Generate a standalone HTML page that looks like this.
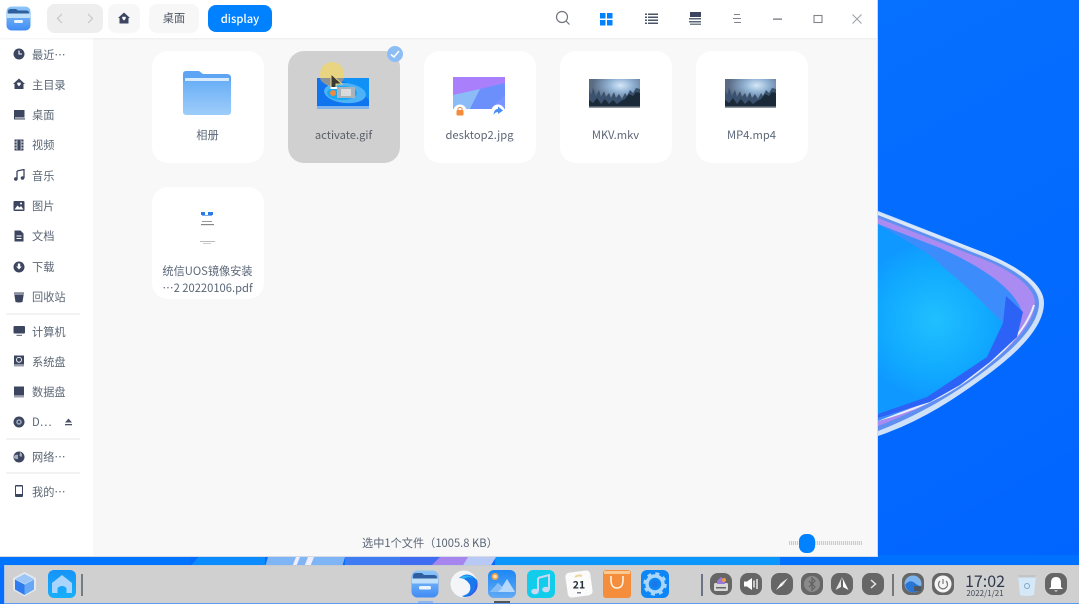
<!DOCTYPE html>
<html><head><meta charset="utf-8">
<style>
*{box-sizing:border-box}
html{background:#0068ff}
html,body{margin:0;padding:0;width:1079px;height:604px;overflow:hidden;font-family:"Noto Sans CJK SC","Liberation Sans",sans-serif;color:#526070}
body{filter:blur(.3px)}
.a{position:absolute}
#win{left:0;top:0;width:878px;height:557px;background:#f8f8f8;border-right:1px solid #d8dbe0;border-bottom:1px solid #d5dce5}
#tb{left:0;top:0;width:877px;height:38px;background:#fff;box-shadow:0 1px 2px rgba(0,0,0,.05)}
#side{left:0;top:38px;width:93px;height:518px;background:#fff}
.btn{background:#f7f7f7;border-radius:8px;top:4px;height:29px;text-align:center;font-size:11.2px;line-height:29px;color:#4c5563}
.it{position:absolute;left:32px;font-size:11.2px;line-height:16px;color:#5a6675;white-space:nowrap;letter-spacing:0}
.ic{position:absolute;left:12.5px;width:12px;height:12px}
.sep{position:absolute;left:6px;width:74px;height:2px;background:#f3f3f3}
.card{position:absolute;width:112px;height:112px;background:#fff;border-radius:16px}
.lbl{position:absolute;left:0;width:112px;top:76px;text-align:center;font-size:11.2px;line-height:17px;color:#5b6778;white-space:nowrap}
#dock{left:4px;top:565px;width:1075px;height:38px;background:#d0d0d0;border-left:1px solid #a9c3e8;border-top:1px solid #c6cbd2}
.tr{position:absolute;top:573px;width:22px;height:22px;border-radius:8px;background:#666}
.tr svg,.di svg{display:block}
.di{position:absolute;top:570px;width:28px;height:28px}
</style></head><body>

<svg class="a" style="left:0;top:0" width="1079" height="604" viewBox="0 0 1079 604">
<defs>
<linearGradient id="bg" x1="0" y1="0" x2="1" y2="1"><stop offset="0" stop-color="#0a78ff"/><stop offset="1" stop-color="#0064ff"/></linearGradient>
<radialGradient id="sw" cx="935" cy="320" r="80" gradientUnits="userSpaceOnUse"><stop offset="0" stop-color="#20c0ff"/><stop offset=".7" stop-color="#10a8ff"/><stop offset="1" stop-color="#0f98ff"/></radialGradient>
</defs>
<rect width="1079" height="604" fill="url(#bg)"/>
<path d="M878 211 L985 253 C1022 268 1044 285 1044 303 C1044 330 1010 358 990 373 C960 395 925 420 878 436Z" fill="#cfe0f9"/>
<path d="M878 215 L982 256 C1016 269 1039 286 1039 303 C1039 328 1006 355 986 370 C957 392 922 414 878 431Z" fill="#5f8ff0"/>
<path d="M878 218 L980 258 C1014 271 1035 288 1035 303 C1035 326 1004 353 984 368 C955 390 920 410 878 426Z" fill="#a98bf2"/>
<path d="M878 420 C925 408 960 388 990 362 C1010 346 1028 325 1034 305" fill="none" stroke="#e6f0fc" stroke-width="2"/>
<path d="M878 224 L940 248 C985 268 1015 290 1022 312 C1020 330 1000 352 980 368 C950 390 920 405 878 421Z" fill="#3d8cfb"/>
<path d="M1006 296 L1023 312 L1017 337 L990 362 L960 385 L930 402 L878 418 V410 L950 380 L1003 323Z" fill="#2c62f6"/>
<path d="M878 224 L927 253 L970 290 L1003 323 L987 357 L927 397 L878 414Z" fill="url(#sw)"/>
<path d="M878 214 L985 254 C1015 266 1035 281 1042 298" fill="none" stroke="#dbe8fa" stroke-width="2"/>
<rect x="495" y="555" width="584" height="12" fill="#0a96fb"/>
<rect x="780" y="555" width="299" height="12" fill="#0070ff"/>
<rect x="0" y="555" width="190" height="12" fill="#0073ff"/>
<path d="M190 567 L200 555 H265 V567Z" fill="#0a8cff"/>
<path d="M265 567 L268 557 H345 L342 567Z" fill="#7fb4f5"/>
<path d="M292 567 L296 557 H300 L296 567Z M304 567 L308 557 H314 L310 567Z" fill="#eef"/>
<path d="M345 557 H400 V567 H345Z" fill="#3f7cf3"/>
<path d="M400 557 H468 V567 H400Z" fill="#3f6cf0"/>
<path d="M440 557 H470 L465 567 H430Z" fill="#a685ee"/>
<path d="M468 557 H496 L490 567 H462Z" fill="#b9c9f5"/>
</svg>

<div class="a" id="win"></div>
<div class="a" id="side"></div>
<div class="a" id="tb"></div>

<!-- Title bar -->
<svg class="a" style="left:6px;top:6px" width="25" height="25" viewBox="0 0 25 25">
<defs><linearGradient id="fm" x1="0" y1="0" x2="0" y2="1"><stop offset="0" stop-color="#8fc6f8"/><stop offset="1" stop-color="#3f8cf5"/></linearGradient></defs>
<rect x="0.500" y="0.500" width="24" height="24" rx="5" fill="url(#fm)"/>
<path d="M2 5.500 Q2 3 5 3 H10 L12 4.500 H20 Q23 4.500 23 7 V9 H2Z" fill="#2f5f9f"/>
<path d="M1 7.500 H24 V12 H1Z" fill="#bfe0fb"/>
<rect x="8" y="14" width="9" height="3" rx="1.200" fill="#e9f4fe"/>
</svg>
<div class="a" style="left:47px;top:4px;width:56px;height:29px;background:#eeeeee;border-radius:8px"></div>
<svg class="a" style="left:47px;top:4px" width="56" height="29" viewBox="0 0 56 29" fill="none" stroke="#c4c6ca" stroke-width="1.200"><path d="M15 10 L10.500 14.500 L15 19"/><path d="M41 10 L45.500 14.500 L41 19"/></svg>
<div class="a btn" style="left:108px;width:32px"></div>
<svg class="a" style="left:118px;top:12px" width="12" height="13" viewBox="0 0 12 13"><path d="M6 0.500 L12 6 H10.500 V11.500 H1.500 V6 H0Z" fill="#3c4660"/><path d="M6 5 C7.800 3.800 9 6 6 8.500 C3 6 4.200 3.800 6 5Z" fill="#fff"/></svg>
<div class="a btn" style="left:149px;width:50px">桌面</div>
<div class="a" style="left:208px;top:5px;width:64px;height:27px;background:#0081ff;border-radius:8px;color:#fff;font-size:11.2px;font-weight:500;line-height:28px;text-align:center">display</div>

<svg class="a" style="left:555px;top:10px" width="16" height="16" viewBox="0 0 16 16" fill="none" stroke="#70757c" stroke-width="1.200"><circle cx="7" cy="7" r="5.500"/><path d="M11 11 L14.500 14.500"/></svg>
<svg class="a" style="left:600px;top:13px" width="13" height="13" viewBox="0 0 13 13" fill="#0081ff"><rect width="5.500" height="5.500"/><rect x="7" width="5.500" height="5.500"/><rect y="7" width="5.500" height="5.500"/><rect x="7" y="7" width="5.500" height="5.500"/></svg>
<svg class="a" style="left:645px;top:13px" width="13" height="13" viewBox="0 0 13 13" fill="#4a5468"><rect y="0.500" width="2" height="1.500"/><rect x="3" y="0.500" width="10" height="1.500"/><rect y="3.500" width="2" height="1.500"/><rect x="3" y="3.500" width="10" height="1.500"/><rect y="6.500" width="2" height="1.500"/><rect x="3" y="6.500" width="10" height="1.500"/><rect y="9.500" width="2" height="1.500"/><rect x="3" y="9.500" width="10" height="1.500"/></svg>
<svg class="a" style="left:689px;top:12px" width="14" height="13" viewBox="0 0 14 13" fill="#3c4660"><rect x="1" width="11" height="5"/><rect x="0" y="6" width="12" height="1.500" fill="#5a6475"/><rect x="0" y="9" width="12" height="1.500" fill="#5a6475"/><rect x="1" y="11.500" width="11" height="1.500" fill="#777f8c"/></svg>
<svg class="a" style="left:733px;top:14px" width="9" height="10" viewBox="0 0 9 10" fill="#80858c"><rect x="1" width="6" height="1"/><rect y="4" width="8" height="1"/><rect x="1" y="8" width="7" height="1"/></svg>
<svg class="a" style="left:773px;top:14px" width="10" height="10" viewBox="0 0 10 10"><rect y="4.500" width="9" height="1.200" fill="#666c74"/></svg>
<svg class="a" style="left:813px;top:14px" width="10" height="10" viewBox="0 0 10 10" fill="none" stroke="#80858c" stroke-width="1.100"><rect x="1" y="1.500" width="8" height="7"/></svg>
<svg class="a" style="left:852px;top:14px" width="10" height="10" viewBox="0 0 10 10" fill="none" stroke="#9a9ea4" stroke-width="1"><path d="M0.500 0.500 L9.500 9.500 M9.500 0.500 L0.500 9.500"/></svg>

<!-- Sidebar -->
<svg class="ic" style="top:48px" viewBox="0 0 12 12"><circle cx="6" cy="6" r="5.500" fill="#3c4660"/><path d="M6 2.500 V6 H9" fill="none" stroke="#fff" stroke-width="1.100"/></svg>
<div class="it" style="top:47px">最近…</div>
<svg class="ic" style="top:78px" viewBox="0 0 12 12"><path d="M6 0.500 L12 6 H10.500 V11 H1.500 V6 H0Z" fill="#3c4660"/><path d="M6 4.800 C7.800 3.600 9 5.800 6 8.200 C3 5.800 4.200 3.600 6 4.800Z" fill="#fff"/></svg>
<div class="it" style="top:77px">主目录</div>
<svg class="ic" style="top:109px" viewBox="0 0 12 12"><path d="M1.500 1 H11.500 V8.500 H1.500Z" fill="#3c4660"/><rect x="1" y="9" width="11" height="1.800" fill="#8a92a0"/><rect x="1" y="1" width="1" height="9" fill="#3c4660"/></svg>
<div class="it" style="top:107px">桌面</div>
<svg class="ic" style="top:139px" viewBox="0 0 12 12"><rect x="1.500" y="0.500" width="9" height="11" fill="#3c4660"/><path d="M4 1 V11 M8 1 V11" stroke="#b5bac4" stroke-width="1"/><path d="M1.500 3 H4 M1.500 6 H4 M1.500 9 H4 M8 3 H10.500 M8 6 H10.500 M8 9 H10.500" stroke="#fff" stroke-width=".8"/></svg>
<div class="it" style="top:137px">视频</div>
<svg class="ic" style="top:169px" viewBox="0 0 12 12"><path d="M4 2 L11 0.500 V9 M4 2 V10.500" fill="none" stroke="#3c4660" stroke-width="1.300"/><circle cx="2.800" cy="10" r="1.800" fill="#3c4660"/><circle cx="9.500" cy="9" r="1.800" fill="#3c4660"/></svg>
<div class="it" style="top:168px">音乐</div>
<svg class="ic" style="top:200px" viewBox="0 0 12 12"><rect x="0.500" y="1" width="11" height="10" rx="1" fill="#3c4660"/><path d="M1.500 9.500 L4.500 5.500 L6.500 7.500 L8 6 L10.500 9.500Z" fill="#fff"/><circle cx="8" cy="3.500" r="1" fill="#fff"/></svg>
<div class="it" style="top:198px">图片</div>
<svg class="ic" style="top:230px" viewBox="0 0 12 12"><path d="M1.500 0.500 H7.500 L10.500 3.500 V11.500 H1.500Z" fill="#3c4660"/><path d="M3.500 6 H8.500 M3.500 8.500 H8.500" stroke="#fff" stroke-width="1"/></svg>
<div class="it" style="top:228px">文档</div>
<svg class="ic" style="top:261px" viewBox="0 0 12 12"><circle cx="6" cy="6" r="5.500" fill="#3c4660"/><path d="M4.800 2.500 H7.200 V5.500 H8.800 L6 8.500 L3.200 5.500 H4.800Z" fill="#fff"/></svg>
<div class="it" style="top:259px">下载</div>
<svg class="ic" style="top:291px" viewBox="0 0 12 12"><path d="M1 1.500 H11 L9.500 11 Q6 12 2.500 11Z" fill="#3c4660"/><path d="M1.500 3 H10.500" stroke="#fff" stroke-width=".8"/></svg>
<div class="it" style="top:289px">回收站</div>
<div class="sep" style="top:313px"></div>
<svg class="ic" style="top:325px" viewBox="0 0 12 12"><rect x="0.500" y="1" width="11.500" height="7.500" rx="1" fill="#3c4660"/><rect x="3.500" y="9.800" width="5.500" height="1.200" fill="#6f7888"/></svg>
<div class="it" style="top:324px">计算机</div>
<svg class="ic" style="top:355px" viewBox="0 0 12 12"><rect x="1" y="0.500" width="10" height="9" fill="#3c4660"/><rect x="1" y="9.800" width="10" height="1.700" fill="#9aa1ad"/><circle cx="6" cy="4.800" r="2.500" fill="none" stroke="#fff" stroke-width=".9"/></svg>
<div class="it" style="top:354px">系统盘</div>
<svg class="ic" style="top:386px" viewBox="0 0 12 12"><rect x="1" y="0.500" width="10" height="9" fill="#3c4660"/><rect x="1" y="9.800" width="10" height="1.700" fill="#9aa1ad"/></svg>
<div class="it" style="top:384px">数据盘</div>
<svg class="ic" style="top:416px" viewBox="0 0 12 12"><circle cx="6" cy="6" r="5.500" fill="#3c4660"/><circle cx="6" cy="6" r="2.800" fill="#9aa5b8"/><circle cx="6" cy="6" r="1.200" fill="#3c4660"/></svg>
<div class="it" style="top:414px">D…</div>
<svg class="a" style="left:64px;top:418px" width="9" height="8" viewBox="0 0 9 8" fill="#4a5468"><path d="M4.500 0.500 L8 4.500 H1Z"/><rect x="1" y="6" width="7" height="1.300"/></svg>
<div class="sep" style="top:438px"></div>
<svg class="ic" style="top:451px" viewBox="0 0 12 12"><circle cx="6" cy="6" r="5.500" fill="#3c4660"/><path d="M1 5 Q3 3 5 4 V8 Q3 8.500 1 7Z M7 1 Q10 3 8.500 6 L6.500 5Z" fill="#a5adba"/></svg>
<div class="it" style="top:449px">网络…</div>
<div class="sep" style="top:472px"></div>
<svg class="ic" style="top:485px" viewBox="0 0 12 12"><rect x="2" y="0" width="8" height="12" rx="1" fill="#3c4660"/><rect x="3" y="1.500" width="6" height="7.500" fill="#fff"/></svg>
<div class="it" style="top:484px">我的…</div>

<!-- Cards -->
<div class="card" style="left:151.500px;top:50.500px"><div class="lbl">相册</div></div>
<svg class="a" style="left:183px;top:70px" width="48" height="46" viewBox="0 0 48 46">
<defs><linearGradient id="fo" x1="0" y1="0" x2="0" y2="1"><stop offset="0" stop-color="#6aaff6"/><stop offset="1" stop-color="#9fcdfa"/></linearGradient></defs>
<path d="M0 4 Q0 1 3 1 H16 L20 4 H44 Q48 4 48 8 V14 H0Z" fill="#5ea4f4"/>
<path d="M2 8 H46 V12 H2Z" fill="#d8ebfc"/>
<path d="M0 11 H48 V42 Q48 45 44 45 H4 Q0 45 0 42Z" fill="url(#fo)"/>
</svg>

<div class="card" style="left:287.500px;top:50.500px;background:#d0d0d0"><div class="lbl" style="color:#5a5f68">activate.gif</div></div>
<svg class="a" style="left:317px;top:60px" width="54" height="50" viewBox="0 0 54 50">
<rect x="0" y="18" width="52" height="31" fill="#0f74ee"/>
<path d="M18 18 H52 V40 Q40 26 18 18Z" fill="#1091f5"/>
<ellipse cx="28" cy="33" rx="21" ry="10" fill="#4eb2f7" transform="rotate(6 28 33)"/>
<ellipse cx="25" cy="33" rx="15" ry="7" fill="#18a8f8"/>
<rect x="20" y="27" width="18" height="11" fill="#a8b3bc"/>
<rect x="24" y="29" width="10" height="7" fill="#d8dadc"/>
<circle cx="16" cy="33" r="3" fill="#ef8a3c"/>
<rect x="0" y="46" width="52" height="3" fill="#7fb3ee"/>
<circle cx="15" cy="14" r="12" fill="#e8d481"/>
<path d="M3 18 H27 Q26 24 15 26 Q4 24 3 18Z" fill="#8d9298"/>
<path d="M14 14 L25 24 L19 24 L19 28 H14Z" fill="#3a3a30" stroke="#e8d481" stroke-width="1"/>
<path d="M13.500 27 H20 V29 H13.500Z" fill="#fff"/>
</svg>
<svg class="a" style="left:387px;top:46px" width="16" height="16" viewBox="0 0 16 16"><circle cx="8" cy="8" r="8" fill="#8dbdf5"/><path d="M4 8.500 L7 11 L12 5" fill="none" stroke="#fff" stroke-width="1.500"/></svg>

<div class="card" style="left:423.500px;top:50.500px"><div class="lbl">desktop2.jpg</div></div>
<svg class="a" style="left:450px;top:75px" width="58" height="46" viewBox="0 0 58 46">
<rect x="3" y="2" width="52" height="32" fill="#7a94ff"/>
<path d="M3 2 H55 V9 L3 20Z" fill="#a97ffb"/>
<path d="M3 20 L30 14 L20 34 H3Z" fill="#8bbcf8"/>
<path d="M30 14 L55 8 V20 L40 34 H20Z" fill="#6c90fb"/>
<circle cx="10" cy="36" r="6.500" fill="#fff"/><rect x="6.500" y="35" width="7" height="5.500" rx="1" fill="#f58a3a"/><path d="M8 35 V33.500 Q10 31 12 33.500 V35" fill="none" stroke="#f58a3a" stroke-width="1"/>
<circle cx="48" cy="36" r="6.500" fill="#fff"/><path d="M48 31.500 L53 35.500 L48 39 V37 Q45 37 43.500 40 Q44 34 48 33.800Z" fill="#4c8ef5"/>
</svg>

<div class="card" style="left:559.500px;top:50.500px"><div class="lbl">MKV.mkv</div></div>
<div class="card" style="left:695.500px;top:50.500px"><div class="lbl">MP4.mp4</div></div>
<svg width="0" height="0" style="position:absolute"><defs>
<radialGradient id="sky" cx=".62" cy=".22" r=".55"><stop offset="0" stop-color="#d5e8f8"/><stop offset=".45" stop-color="#8fb0d2"/><stop offset="1" stop-color="#5a6c84"/></radialGradient>
</defs></svg>
<svg class="a" style="left:589px;top:79px" width="51" height="29" viewBox="0 0 51 29"><rect width="51" height="29" fill="url(#sky)"/><path d="M0 29 V10 L2 16 L4 9 L7 17 L10 11 L12 18 L15 12 L17 18 L20 14 L22 19 L25 13 L27 19 L30 15 L33 20 L36 14 L38 17 L41 11 L44 14 L47 9 L51 10 V29Z" fill="#3a526e"/><path d="M0 29 V21 L4 24 L8 19 L12 25 L16 20 L20 25 L24 21 L28 25 L32 22 L36 20 L40 15 L44 17 L47 13 L51 14 V29Z" fill="#1b2a38"/><rect y="27.500" width="51" height="1.500" fill="#8e98a0"/></svg>
<svg class="a" style="left:725px;top:79px" width="51" height="29" viewBox="0 0 51 29"><rect width="51" height="29" fill="url(#sky)"/><path d="M0 29 V10 L2 16 L4 9 L7 17 L10 11 L12 18 L15 12 L17 18 L20 14 L22 19 L25 13 L27 19 L30 15 L33 20 L36 14 L38 17 L41 11 L44 14 L47 9 L51 10 V29Z" fill="#3a526e"/><path d="M0 29 V21 L4 24 L8 19 L12 25 L16 20 L20 25 L24 21 L28 25 L32 22 L36 20 L40 15 L44 17 L47 13 L51 14 V29Z" fill="#1b2a38"/><rect y="27.500" width="51" height="1.500" fill="#8e98a0"/></svg>

<div class="card" style="left:151.500px;top:186.500px">
<div class="lbl" style="top:76px;line-height:17px;color:#5b6778">统信UOS镜像安装<br>…2 20220106.pdf</div>
</div>
<svg class="a" style="left:198px;top:208px" width="20" height="40" viewBox="0 0 20 40">
<rect x="3" y="4" width="4" height="3" fill="#2a7be8"/><rect x="10" y="4" width="5" height="3" fill="#2a7be8"/><rect x="4" y="7" width="10" height="1" fill="#7aa9ee"/>
<rect x="4" y="13" width="10" height="1" fill="#999"/><rect x="3" y="16" width="13" height="1.200" fill="#888"/>
<rect x="2" y="33" width="15" height="1" fill="#bbb"/><rect x="5" y="35" width="8" height="1" fill="#ccc"/>
</svg>

<!-- Status bar -->
<div class="a" style="left:362px;top:535px;font-size:11.2px;line-height:17px;color:#5a6675;white-space:nowrap">选中1个文件（1005.8 KB）</div>
<div class="a" style="left:789px;top:541px;width:73px;height:4px;background:repeating-linear-gradient(90deg,#c9ccd0 0 1px,#f1f1f1 1px 2px)"></div>
<div class="a" style="left:799px;top:534px;width:16px;height:19px;background:#0081ff;border-radius:7px"></div>

<!-- Dock -->
<div class="a" id="dock"></div>
<div class="a" style="left:4px;top:603px;width:1075px;height:1px;background:#5e9bf5"></div>

<svg class="a" style="left:12px;top:571px" width="25" height="26" viewBox="0 0 25 26">
<path d="M12.500 1 L24 7 V19 L12.500 25.500 L1 19 V7Z" fill="#e3e8ef"/>
<path d="M12.500 3 L22 8 L12.500 13 L3 8Z" fill="#9cc6f8"/>
<path d="M3 8.500 L12.500 13.500 V24 L3 18.500Z" fill="#2f7cf0"/>
<path d="M22 8.500 L12.500 13.500 V24 L22 18.500Z" fill="#66a8f5"/>
</svg>
<svg class="a" style="left:48px;top:570px" width="28" height="28" viewBox="0 0 28 28">
<defs><linearGradient id="hm" x1="0" y1="0" x2="0" y2="1"><stop offset="0" stop-color="#1693f8"/><stop offset="1" stop-color="#18b0fb"/></linearGradient></defs>
<rect width="28" height="28" rx="6" fill="url(#hm)"/>
<path d="M14 5 L24 13 V23 H18.500 V18 Q14 14 9.500 18 V23 H4 V13Z" fill="#a9d4fb"/>
</svg>
<div class="a" style="left:81px;top:574px;width:2px;height:22px;background:#777c82"></div>

<!-- Center dock icons -->
<div class="di" style="left:411px"><svg width="28" height="28" viewBox="0 0 28 28">
<defs><linearGradient id="fm2" x1="0" y1="0" x2="0" y2="1"><stop offset="0" stop-color="#8fc6f8"/><stop offset="1" stop-color="#3f8cf5"/></linearGradient></defs>
<rect x="0.500" y="0.500" width="27" height="27" rx="6" fill="url(#fm2)"/>
<path d="M2 6 Q2 3 5 3 H11 L13 5 H23 Q26 5 26 8 V10 H2Z" fill="#2f5f9f"/>
<path d="M1 8.500 H27 V13.500 H1Z" fill="#bfe0fb"/>
<rect x="8" y="16" width="12" height="3.500" rx="1.500" fill="#e9f4fe"/></svg></div>
<div class="a" style="left:418px;top:601px;width:15px;height:2px;background:#8fb9ee"></div>
<div class="di" style="left:450px"><svg width="28" height="28" viewBox="0 0 28 28">
<circle cx="14" cy="14" r="13.500" fill="#f3f5f8"/>
<path d="M9 8 Q18 0 27 10 Q30 20 20 26 Q14 28 12 26 Q22 24 20 15 Q16 8 9 8Z" fill="#1878ee"/>
<path d="M18 26 Q26 22 26 12 Q30 20 20 26Z" fill="#3d55e8"/>
<path d="M10 7.500 Q17 3 24 8 Q17 6 14 9Z" fill="#27b4f7"/></svg></div>
<div class="di" style="left:488px"><svg width="28" height="28" viewBox="0 0 28 28">
<defs><linearGradient id="ph" x1="0" y1="0" x2="0" y2="1"><stop offset="0" stop-color="#1c87f5"/><stop offset="1" stop-color="#62aaf5"/></linearGradient></defs>
<rect width="28" height="28" rx="6" fill="url(#ph)"/>
<circle cx="7" cy="6.500" r="3.500" fill="#f3a24e"/><circle cx="7" cy="6.500" r="1.800" fill="#fbe0b3"/>
<path d="M2 22 L10 13 L14 17 L19 9 L27 22Z" fill="#b6d9fb"/>
<path d="M2 22 L10 13 L14 18 L10 22Z" fill="#88bdf5"/></svg></div>
<div class="a" style="left:494px;top:601px;width:16px;height:2px;background:#555"></div>
<div class="di" style="left:527px"><svg width="28" height="28" viewBox="0 0 28 28">
<rect width="28" height="28" rx="6" fill="#12ccec"/>
<path d="M11 8 L22 5 V19" fill="none" stroke="#c9d8f0" stroke-width="2"/><path d="M11 8 V21" stroke="#c9d8f0" stroke-width="2"/>
<ellipse cx="8" cy="21.500" rx="3.800" ry="2.800" fill="#c9d8f0"/><ellipse cx="19" cy="19.500" rx="3.800" ry="2.800" fill="#c9d8f0"/></svg></div>
<div class="di" style="left:565px"><svg width="28" height="28" viewBox="0 0 28 28">
<rect x="1.500" y="1.500" width="25" height="25" rx="4" fill="#fbfbfb" transform="rotate(-8 14 14)"/>
<path d="M10 7 Q13.500 4.500 17 6" stroke="#ecd79a" stroke-width="2" fill="none"/>
<text x="14" y="18.500" text-anchor="middle" font-family="Noto Sans CJK SC,sans-serif" font-size="10.500" font-weight="700" fill="#26303e">21</text>
<rect x="12" y="22" width="4" height="1.500" fill="#7a8390"/></svg></div>
<div class="di" style="left:603px"><svg width="28" height="28" viewBox="0 0 28 28">
<rect width="28" height="28" rx="3" fill="#f58e3c"/>
<rect x="1" y="1" width="26" height="3" fill="#fbc98f"/>
<path d="M8 6 V11 Q8.500 18 14 18 Q19.500 18 20 11 V6" fill="none" stroke="#fdf3e3" stroke-width="1.600"/></svg></div>
<div class="di" style="left:641px"><svg width="28" height="28" viewBox="0 0 28 28">
<rect width="28" height="28" rx="6" fill="#0e86f6"/>
<circle cx="14" cy="14" r="8" fill="none" stroke="#a9d6fb" stroke-width="3.500"/>
<circle cx="14" cy="14" r="10.500" fill="none" stroke="#a9d6fb" stroke-width="2.500" stroke-dasharray="4 4.250"/>
<circle cx="14" cy="14" r="3.500" fill="#1a78e8"/></svg></div>

<!-- Tray -->
<div class="a" style="left:701px;top:574px;width:2px;height:22px;background:#6b7484"></div>
<div class="tr" style="left:710px"><svg width="22" height="22" viewBox="0 0 22 22"><rect x="4" y="10" width="14" height="8" rx="1.500" fill="#d8d8d8"/><path d="M11 4 L15 8 V11 H7 V8Z" fill="#9a78d8"/><circle cx="14" cy="7" r="2" fill="#ef9a3c"/><rect x="6" y="14" width="10" height="1.500" fill="#666"/></svg></div>
<div class="tr" style="left:740px"><svg width="22" height="22" viewBox="0 0 22 22"><path d="M4 8.500 H7 L12 5 V17 L7 13.500 H4Z" fill="#fff"/><path d="M14 7.500 V14.500 M17 6 V16" stroke="#e8e8e8" stroke-width="1.500"/></svg></div>
<div class="tr" style="left:771px"><svg width="22" height="22" viewBox="0 0 22 22"><path d="M5 17 L10 10 L12 12Z" fill="#fff"/><path d="M17 5 L10 10 L12 12Z" fill="#e8e8e8"/></svg></div>
<div class="tr" style="left:801px"><svg width="22" height="22" viewBox="0 0 22 22"><circle cx="11" cy="11" r="8" fill="#8a8a8a"/><path d="M8 8 L14 14 L11 17 V5 L14 8 L8 14" fill="none" stroke="#5f5f5f" stroke-width="1.100"/></svg></div>
<div class="tr" style="left:831px"><svg width="22" height="22" viewBox="0 0 22 22"><path d="M11 4 L17.500 17 L12 14 V8Z" fill="#fff"/><path d="M11 4 L4.500 17 L10 14 V8Z" fill="#e5e5e5"/></svg></div>
<div class="tr" style="left:862px"><svg width="22" height="22" viewBox="0 0 22 22" fill="none" stroke="#e5e5e5" stroke-width="1.500"><path d="M9 7 L13.500 11 L9 15"/></svg></div>
<div class="a" style="left:892px;top:574px;width:2px;height:22px;background:#777"></div>
<div class="tr" style="left:902px"><svg width="22" height="22" viewBox="0 0 22 22"><circle cx="11" cy="11" r="8.500" fill="#7cb5ee"/><path d="M3 12 Q8 5 14 11 L19 14 Q16 19.500 11 19.500 Q5 19 3 12Z" fill="#2a76d6"/><rect x="12" y="13" width="7" height="5" fill="#4d5865"/></svg></div>
<div class="tr" style="left:932px"><svg width="22" height="22" viewBox="0 0 22 22"><circle cx="11" cy="11" r="8.500" fill="#f5f5f5"/><path d="M8 8 A4.500 4.500 0 1 0 14 8" fill="none" stroke="#777" stroke-width="1.200"/><path d="M11 6 V11" stroke="#777" stroke-width="1.200"/></svg></div>
<div class="a" style="left:955px;top:569px;width:60px;text-align:center;font-size:16px;line-height:22px;color:#2f3a4d;white-space:nowrap">17:02</div>
<div class="a" style="left:955px;top:588px;width:60px;text-align:center;font-size:8px;line-height:12px;color:#444c58;white-space:nowrap">2022/1/21</div>
<svg class="a" style="left:1016px;top:573px" width="22" height="24" viewBox="0 0 22 24"><path d="M2 2 H20 L18 22 Q11 24 4 22Z" fill="#d5e8f7"/><path d="M2 2 H20 L19.500 4.500 H2.500Z" fill="#c2c5c8"/><circle cx="11" cy="13" r="2.500" fill="none" stroke="#7ea5c8" stroke-width="1"/></svg>
<div class="tr" style="left:1045px"><svg width="22" height="22" viewBox="0 0 22 22"><path d="M11 4 Q16 4 16 10 V14 L18 16 H4 L6 14 V10 Q6 4 11 4Z" fill="#fff"/><path d="M9 17.500 H13 Q11 19.500 9 17.500Z" fill="#fff"/></svg></div>

</body></html>
